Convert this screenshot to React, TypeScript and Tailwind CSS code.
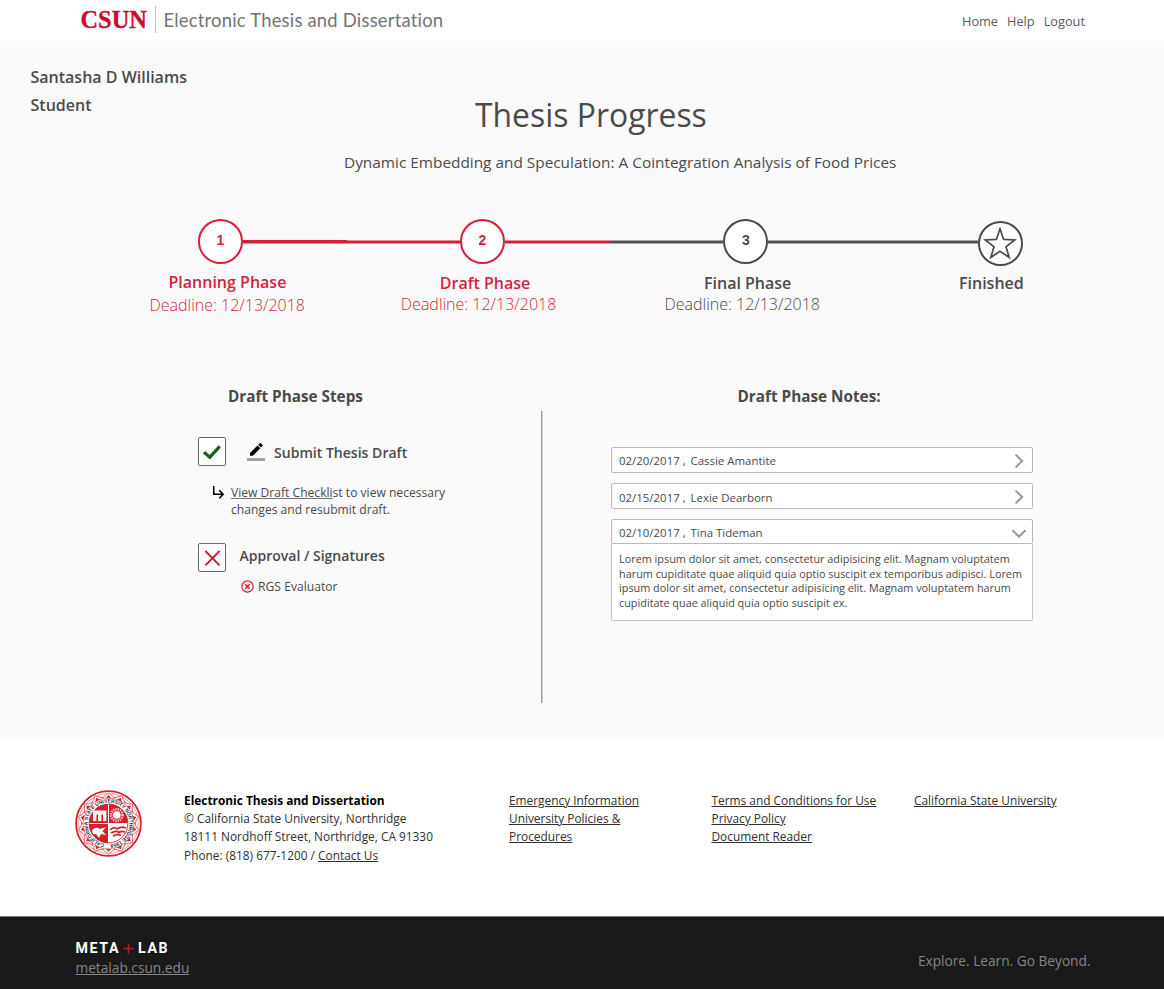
import { MdSubdirectoryArrowRight } from "react-icons/md";

function Seal() {
  const petals = Array.from({ length: 14 }, (_, i) => (i * 360) / 14);
  return (
    <svg className="-mt-px h-[67px] w-[67px] shrink-0" viewBox="0 0 67 67" fill="none">
      <circle cx="33.5" cy="33.5" r="32.4" fill="#fff" stroke="#d0232b" strokeWidth="1.8" />
      <circle cx="33.5" cy="33.5" r="29.8" stroke="#efb0b3" strokeWidth="1.2" />
      {petals.map((a) => (
        <g key={a} transform={`rotate(${a} 33.5 33.5)`}>
          <path d="M27 7.8Q31 6 33.5 2.6Q36 6 40 7.8Q37 9.6 33.5 9.6Q30 9.6 27 7.8Z" fill="#fff" stroke="#d94b52" strokeWidth="0.8" />
          <path d="M29.4 8.8Q32 7.6 33.5 5Q35 7.6 37.6 8.8Z" fill="#d0232b" />
        </g>
      ))}
      <circle cx="33.5" cy="33.5" r="25.2" fill="#fff" stroke="#e58a8e" strokeWidth="0.6" />
      <defs>
        <path id="ring" d="M33.5 54.4A20.9 20.9 0 1 1 33.6 54.4" />
      </defs>
      <text fontFamily="Liberation Sans" fontWeight="700" fontSize="5.2" fill="#333">
        <textPath href="#ring" startOffset="4" textLength="125" lengthAdjust="spacingAndGlyphs">CALIFORNIA STATE UNIVERSITY NORTHRIDGE 1958</textPath>
      </text>
      <circle cx="33.5" cy="33.5" r="19.8" fill="#fff" />
      <path d="M34 33H53A19.5 19.5 0 0 0 34 14Z" fill="#d0232b" />
      <path d="M33 34V53A19.5 19.5 0 0 1 14 34Z" fill="#d0232b" />
      <path d="M33 33V14A19.5 19.5 0 0 0 14 33Z" fill="#d0232b" />
      <circle cx="33.5" cy="33.5" r="19.4" stroke="#d0232b" strokeWidth="0.9" />
      <path d="M18 20.5H31.4V31H28V24.6H26.4V31H23V24.6H21.4V31H18Z" fill="#fff" />
      <circle cx="41.8" cy="25" r="3.8" fill="#fff" />
      <circle cx="41.8" cy="25" r="5.8" stroke="#fff" strokeWidth="2.4" strokeDasharray="1.2 1.1" opacity="0.85" />
      <path d="M17 40Q21 36 25 39L31 37L27.5 41L31 45L26 44L24 48L21 44Q17 45 17 40Z" fill="#fff" />
      <path d="M35 40Q39 36 42 39Q46 36 51 38M36 43Q41 40 44 42.5Q47 40.5 50 42M38 46Q42 43.5 46 45.5" stroke="#d0232b" strokeWidth="1.7" />
    </svg>
  );
}

function Box({ children }: { children: React.ReactNode }) {
  return (
    <div className="mr-px flex h-[29px] w-[28px] shrink-0 items-center justify-center rounded-[2px] border border-[#6a6a6a] bg-white">
      {children}
    </div>
  );
}

function Chevron({ down }: { down?: boolean }) {
  return (
    <svg className="h-4 w-4" viewBox="0 0 16 16" fill="none" stroke="#97989b" strokeWidth="2">
      {down ? <path d="M1.4 5.2L8 11.5L14.6 5.2" /> : <path d="M4.6 1.6L11.2 8L4.6 14.4" />}
    </svg>
  );
}

function Step({ n, className }: { n: number; className: string }) {
  return (
    <div className={`flex h-[45px] w-[45px] shrink-0 items-center justify-center rounded-full border-2 bg-white pb-[2px] font-['Liberation_Sans'] text-[14px] font-bold ${className}`}>
      {n}
    </div>
  );
}

function Phase({ title, date, className }: { title: string; date?: string; className: string }) {
  return (
    <div className={className}>
      <div className="pt-[3px] text-[16px] leading-5 font-semibold">{title}</div>
      {date && <div className="leading-[22px] font-light">Deadline: {date}</div>}
    </div>
  );
}

function Note({ date, name, down, className }: { date: string; name: string; down?: boolean; className: string }) {
  return (
    <div className={`flex w-[422px] items-center rounded-[2px] border border-[#b9b9b9] bg-white pr-[5px] pl-[7.5px] text-[11.45px] ${className}`}>
      <span className="w-[71.5px]">{date} ,</span>
      <span className="grow">{name}</span>
      <Chevron down={down} />
    </div>
  );
}

export default function App() {
  return (
    <div className="h-[989px] w-[1164px] overflow-hidden bg-white font-['Open_Sans',sans-serif] whitespace-nowrap text-[#4a4a4a]">
      <header className="flex h-[41px] items-center pl-[80.5px]">
        <div className="w-[74.5px] pb-px font-['Liberation_Serif',serif] text-[24.4px] leading-6 font-bold text-[#d2072d] [-webkit-text-stroke:0.3px]">CSUN</div>
        <div className="mb-0.5 h-[27px] w-px bg-[#c4c4c4]" />
        <div className="w-[806px] pb-px pl-[7.5px] font-['Lato',sans-serif] text-[18.4px] leading-6 tracking-[0.22px] text-[#747474] [font-variant-ligatures:none]">
          Electronic Thesis and Dissertation
        </div>
        <nav className="flex gap-[9px] text-[12.75px] leading-5 text-[#5a5a5a]">
          <a>Home</a>
          <a>Help</a>
          <a>Logout</a>
        </nav>
      </header>

      <main className="h-[698px] bg-[#fafafa] pt-[22px]">
        <div className="flex pl-[30.5px]">
          <div className="w-[313.5px] text-[16px] leading-7 font-semibold">
            <div>Santasha D Williams</div>
            <div>Student</div>
          </div>
          <div className="pt-7">
            <h1 className="pl-[131px] text-[31.9px] leading-[48px]">Thesis Progress</h1>
            <p className="mt-[11px] text-[15.35px] leading-6 tracking-[0.01px]">Dynamic Embedding and Speculation: A Cointegration Analysis of Food Prices</p>
          </div>
        </div>

        <div className="mt-[45px] flex h-[47px] items-start pl-[198px]">
          <Step n={1} className="border-[#d31f3c] text-[#d31f3c]" />
          <div className="mt-[21px] h-1 w-[104px] border-b border-[#e58c9a] bg-[#d31f3c]" />
          <div className="mt-[21px] h-1 w-[113px] border-y border-[#e58c9a] bg-[#d31f3c]" />
          <Step n={2} className="border-[#d31f3c] text-[#d31f3c]" />
          <div className="mt-[21px] h-1 w-[105px] border-y border-[#e58c9a] bg-[#d31f3c]" />
          <div className="mt-[21px] h-1 w-[113.4px] border-y border-[#a9a9a9] bg-[#505050]" />
          <Step n={3} className="border-[#4a4a4a]" />
          <div className="mt-[21px] h-1 w-[209.6px] border-y border-[#a9a9a9] bg-[#505050]" />
          <div className="mt-0.5 flex h-[45px] w-[45px] items-center justify-center rounded-full border-2 border-[#4a4a4a] bg-white">
            <svg className="h-[34px] w-[34px]" viewBox="0 0 34 34" fill="none" stroke="#4a4a4a" strokeWidth="1.7">
              <path d="M17 1.8L20.6 12.4L31.8 12.9L23 19.8L26.2 30.4L17 24.3L7.8 30.4L11 19.8L2.2 12.9L13.4 12.4Z" />
            </svg>
          </div>
        </div>

        <div className="mt-1 flex h-[46px] pl-[149.5px] text-[16px]">
          <div className="w-[251.3px] text-[#d31f3c]">
            <div className="pt-px pl-[19px] leading-[22px] font-semibold">Planning Phase</div>
            <div className="mt-px leading-[22px] font-light">Deadline: 12/13/2018</div>
          </div>
          <Phase title="Draft Phase" date="12/13/2018" className="w-[263.7px] text-[#d31f3c] [&>div:first-child]:pl-[39px]" />
          <Phase title="Final Phase" date="12/13/2018" className="w-[294.5px] [&>div:first-child]:pl-[39.5px]" />
          <Phase title="Finished" className="" />
        </div>

        <div className="mt-[68px] flex">
          <section className="w-[541px] pl-[197.5px]">
            <h2 className="pt-px pl-[30.5px] text-[15.3px] leading-[23px] font-bold">Draft Phase Steps</h2>
            <div className="mt-[29px] flex items-center">
              <Box>
                <svg className="h-[18px] w-[18px]" viewBox="0 0 18 18" fill="none" stroke="#1c5e25" strokeWidth="3.2">
                  <path d="M1 9.2L6.8 14.2L16.8 3.4" />
                </svg>
              </Box>
              <svg className="mr-[9.5px] ml-5 h-[18px] w-[18px]" viewBox="0 0 24 24" fill="#000">
                <path d="M17.75 7L14 3.25l-10 10V17h3.75l10-10zm2.96-2.96c.39-.39.39-1.02 0-1.41L18.37.29c-.39-.39-1.02-.39-1.41 0L15 2.25 18.75 6l1.96-1.96z" />
                <path d="M0 20h24v4H0z" fillOpacity=".36" />
              </svg>
              <span className="mt-0.5 text-[14.05px] leading-5 font-semibold">Submit Thesis Draft</span>
            </div>
            <div className="mt-[18px] flex pl-[12.5px]">
              <MdSubdirectoryArrowRight className="-mt-px text-[18px] text-black" />
              <p className="pl-[3px] text-[12.1px] leading-[17px]">
                <a className="underline decoration-[#777] underline-offset-1">View Draft Checkli</a>st to view necessary
                <br />
                changes and resubmit draft.
              </p>
            </div>
            <div className="mt-[25px] flex items-center">
              <Box>
                <svg className="h-[18px] w-[18px]" viewBox="0 0 18 18" fill="none" stroke="#c8202c" strokeWidth="1.9">
                  <path d="M2.4 2L16.6 16.4M16.6 2L2.4 16.4" />
                </svg>
              </Box>
              <span className="mb-1 pl-[13px] text-[14px] leading-5 font-semibold">Approval / Signatures</span>
            </div>
            <div className="mt-[7px] flex items-center pl-[43px]">
              <svg className="mb-px h-[13px] w-[13px]" viewBox="0 0 13 13" fill="none" stroke="#c8202c" strokeWidth="1.2">
                <circle cx="6.5" cy="6.5" r="5.6" />
                <path d="M4.2 4.2L8.8 8.8M8.8 4.2L4.2 8.8" strokeWidth="1.5" />
              </svg>
              <span className="pl-[4.5px] text-[12.15px] leading-4">RGS Evaluator</span>
            </div>
          </section>

          <div className="mt-[27px] h-[292px] w-0.5 bg-linear-to-r from-[#999] from-50% to-[#d0d0d0] to-50%" />

          <section className="pl-[67.5px]">
            <h2 className="pt-px pl-[127px] text-[15.3px] leading-[23px] font-bold">Draft Phase Notes:</h2>
            <Note date="02/20/2017" name="Cassie Amantite" className="mt-[39px] h-[26px] pt-px" />
            <Note date="02/15/2017" name="Lexie Dearborn" className="mt-2.5 h-[26px] pt-px [&>span]:pt-0.5" />
            <Note date="02/10/2017" name="Tina Tideman" down className="mt-2.5 h-[25px] pt-0.5 [&>span]:pt-px" />
            <div className="h-[77px] w-[422px] rounded-b-[2px] border border-t-0 border-[#c4c4c4] bg-white pt-[8px] pl-[7.5px] text-[10.87px] leading-[14.6px]">
              Lorem ipsum dolor sit amet, consectetur adipisicing elit. Magnam voluptatem
              <br />
              harum cupiditate quae aliquid quia optio suscipit ex temporibus adipisci. Lorem
              <br />
              ipsum dolor sit amet, consectetur adipisicing elit. Magnam voluptatem harum
              <br />
              cupiditate quae aliquid quia optio suscipit ex.
            </div>
          </section>
        </div>
      </main>

      <footer>
        <div className="flex h-[177px] pt-[52px] pl-[75px] text-[11.88px] leading-[18.2px] text-[#303030]">
          <Seal />
          <div className="w-[367px] pl-[42px]">
            <div className="font-bold text-black">Electronic Thesis and Dissertation</div>
            <div>© California State University, Northridge</div>
            <div>18111 Nordhoff Street, Northridge, CA 91330</div>
            <div>
              Phone: (818) 677-1200 / <a className="underline">Contact Us</a>
            </div>
          </div>
          <div className="w-[202.5px] underline">
            <div>Emergency Information</div>
            <div>University Policies &amp;</div>
            <div>Procedures</div>
          </div>
          <div className="w-[202.5px] underline">
            <div>Terms and Conditions for Use</div>
            <div>Privacy Policy</div>
            <div>Document Reader</div>
          </div>
          <div className="underline">California State University</div>
        </div>
        <div className="flex h-[73px] justify-between border-t border-[#777] bg-[#1a1a1a] pr-[73.5px] pl-[75.5px] text-[13.7px] text-[#858585]">
          <div className="pt-[22px]">
            <div className="flex font-['Roboto',sans-serif] text-[14.2px] leading-[19px] font-bold tracking-[1.6px] text-white">
              META
              <svg className="mx-[3px] mt-[4px] h-[11px] w-[11px]" viewBox="0 0 11 11" stroke="#b31f33" strokeWidth="1.6">
                <path d="M5.5 0.5V10.5M0.5 5.5H10.5" />
              </svg>
              <span className="pl-px">LAB</span>
            </div>
            <a className="block leading-5 underline">metalab.csun.edu</a>
          </div>
          <div className="pt-[34px] leading-5">Explore. Learn. Go Beyond.</div>
        </div>
      </footer>
    </div>
  );
}
